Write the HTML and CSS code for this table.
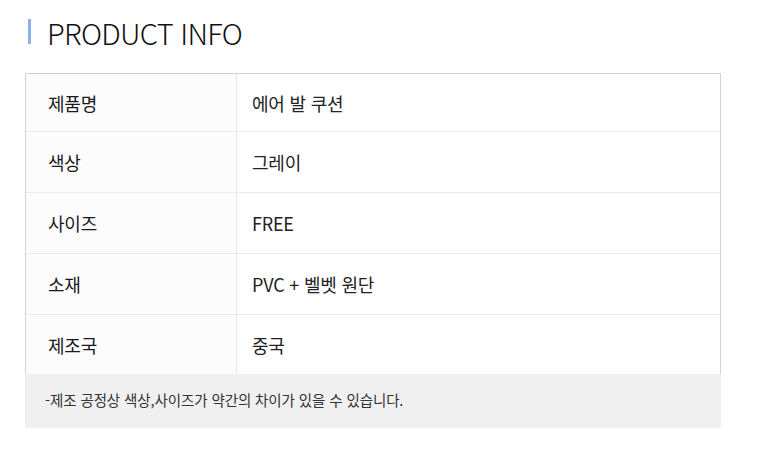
FILE: index.html
```html
<!DOCTYPE html>
<html lang="ko">
<head>
<meta charset="utf-8">
<link rel="stylesheet" href="styles.css">
</head>
<body>
<div class="page">
  <h2 class="title"><span class="bar"></span>PRODUCT INFO</h2>
  <div class="table">
    <div class="row"><div class="label">제품명</div><div class="value">에어 발 쿠션</div></div>
    <div class="row"><div class="label">색상</div><div class="value">그레이</div></div>
    <div class="row"><div class="label">사이즈</div><div class="value">FREE</div></div>
    <div class="row"><div class="label">소재</div><div class="value">PVC + 벨벳 원단</div></div>
    <div class="row"><div class="label">제조국</div><div class="value">중국</div></div>
  </div>
  <div class="note">-제조 공정상 색상,사이즈가 약간의 차이가 있을 수 있습니다.</div>
</div>
</body>
</html>
```
FILE: styles.css
```css
html, body {
  margin: 0;
  padding: 0;
  background: #fff;
}
body {
  font-family: "Noto Sans CJK KR", "Noto Sans", sans-serif;
  color: #222;
}
.page {
  width: 696px;
  padding: 13px 0 0 25px;
}
.title {
  display: flex;
  align-items: center;
  margin: 0 0 23px 3px;
  height: 37px;
  font-size: 29px;
  font-weight: 300;
  letter-spacing: -0.7px;
  color: #111;
}
.bar {
  width: 3px;
  height: 25px;
  background: #8db2ea;
  margin-right: 16px;
}
.table {
  border: 1px solid #d3d3d3;
  border-bottom: none;
}
.row {
  display: flex;
  box-sizing: border-box;
  height: 61px;
  border-bottom: 1px solid #ebebeb;
}
.row:first-child {
  height: 58px;
}
.row:last-child {
  border-bottom: none;
  height: 59px;
}
.label {
  width: 211px;
  background: #fcfcfc;
  border-right: 1px solid #e6e6e6;
  display: flex;
  align-items: center;
  padding-left: 22px;
  box-sizing: border-box;
  font-size: 18px;
  font-weight: 400;
  letter-spacing: -0.2px;
  color: #1a1a1a;
}
.value {
  flex: 1;
  display: flex;
  align-items: center;
  padding-left: 15px;
  font-size: 18px;
  font-weight: 400;
  letter-spacing: -0.2px;
  color: #222;
}
.note {
  background: #f0f0f0;
  height: 54px;
  display: flex;
  align-items: center;
  padding: 0 0 3px 20px;
  box-sizing: border-box;
  font-size: 14.5px;
  font-weight: 400;
  letter-spacing: -0.1px;
  color: #333;
}
```
